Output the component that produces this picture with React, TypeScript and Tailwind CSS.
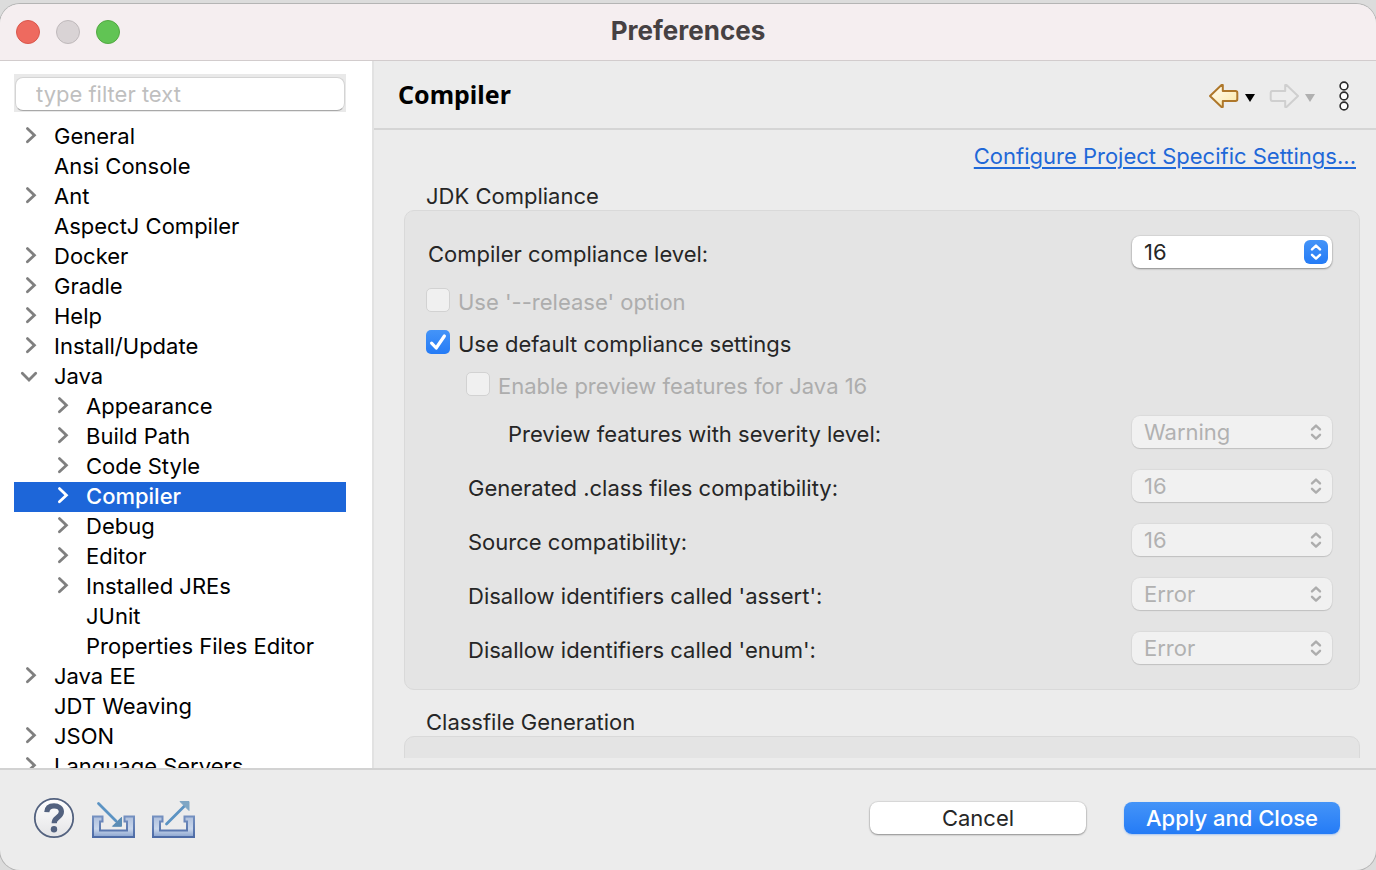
import React from "react";

type Node = { name: string; level?: 0 | 1; state?: "closed" | "open" | "leaf"; selected?: boolean };

const nodes: Node[] = [
  { name: "General" },
  { name: "Ansi Console", state: "leaf" },
  { name: "Ant" },
  { name: "AspectJ Compiler", state: "leaf" },
  { name: "Docker" },
  { name: "Gradle" },
  { name: "Help" },
  { name: "Install/Update" },
  { name: "Java", state: "open" },
  { name: "Appearance", level: 1 },
  { name: "Build Path", level: 1 },
  { name: "Code Style", level: 1 },
  { name: "Compiler", level: 1, selected: true },
  { name: "Debug", level: 1 },
  { name: "Editor", level: 1 },
  { name: "Installed JREs", level: 1 },
  { name: "JUnit", level: 1, state: "leaf" },
  { name: "Properties Files Editor", level: 1, state: "leaf" },
  { name: "Java EE" },
  { name: "JDT Weaving", state: "leaf" },
  { name: "JSON" },
  { name: "Language Servers" },
];

function TreeRow({ name, level = 0, state = "closed", selected }: Node) {
  return (
    <li
      role="treeitem"
      aria-level={level + 1}
      aria-selected={!!selected}
      className={`flex h-[30px] shrink-0 items-center gap-3 whitespace-nowrap ${level ? "pl-[38px]" : "pl-[6px]"} ${
        selected ? "bg-[#1d66d9] font-medium text-white" : "text-black"
      }`}
    >
      <svg width="22" height="22" viewBox="0 0 22 22" className={selected ? "text-white" : "text-[#808080]"} fill="none" stroke="currentColor" strokeWidth="2.8" strokeLinecap="round" strokeLinejoin="miter" aria-hidden="true">
        {state === "closed" && <path d="M7.4 2.6 14.4 9.2 7.4 15.8" />}
        {state === "open" && <path d="M2.3 7.3 9 14 15.7 7.3" />}
      </svg>
      <span className="pb-[2px]">{name}</span>
    </li>
  );
}

function Popup({ id, value, disabled }: { id: string; value: string; disabled?: boolean }) {
  return (
    <div className="relative w-[200px] shrink-0">
      <select
        id={id}
        disabled={disabled}
        defaultValue={value}
        className={`block h-8 w-full appearance-none rounded-[8px] pl-3 pr-9 leading-8 opacity-100 outline-none ${
          disabled
            ? "bg-[#f1f1f1] text-[#b1b1b1] shadow-[0_0_1px_1px_rgba(0,0,0,0.04),0_1px_1px_rgba(0,0,0,0.12)]"
            : "bg-white text-[#262626] shadow-[0_0_1px_1px_rgba(0,0,0,0.06),0_1px_2px_rgba(0,0,0,0.35)]"
        }`}
      >
        <option>{value}</option>
      </select>
      <span
        className={`pointer-events-none absolute right-1 top-1 flex size-6 items-center justify-center rounded-[6px] ${
          disabled ? "text-[#adadad]" : "bg-linear-to-b from-[#4494f8] to-[#247bf6] text-white"
        }`}
      >
        <svg width="24" height="24" viewBox="0 0 24 24" fill="none" stroke="currentColor" strokeWidth="2.4" strokeLinecap="round" strokeLinejoin="round" aria-hidden="true">
          <path d="M8 9.4 12 5.6l4 3.8M8 14.8l4 3.8 4-3.8" />
        </svg>
      </span>
    </div>
  );
}

function SelectRow({ id, label, value, disabled, indent }: { id: string; label: string; value: string; disabled?: boolean; indent: string }) {
  return (
    <div className={`flex h-[54px] items-center justify-between ${indent}`}>
      <label htmlFor={id} className="pt-1">
        {label}
      </label>
      <Popup id={id} value={value} disabled={disabled} />
    </div>
  );
}

function CheckRow({ id, label, checked, disabled, indent }: { id: string; label: string; checked?: boolean; disabled?: boolean; indent: string }) {
  return (
    <div className={`flex h-[42px] items-center gap-2 ${indent}`}>
      <span className="relative size-6 shrink-0">
        <input
          id={id}
          type="checkbox"
          defaultChecked={checked}
          disabled={disabled}
          className="block size-6 appearance-none rounded-[5px] border border-[#d2d2d2] bg-[#f0f0f0] checked:border-0 checked:bg-linear-to-b checked:from-[#4494f8] checked:to-[#247bf6]"
        />
        {checked && (
          <svg className="pointer-events-none absolute inset-0" width="24" height="24" viewBox="0 0 24 24" fill="none" stroke="#fff" strokeWidth="3.2" strokeLinecap="round" strokeLinejoin="round" aria-hidden="true">
            <path d="M5.6 13.2 10.2 18 18.4 6" />
          </svg>
        )}
      </span>
      <label htmlFor={id} className={`pt-1 ${disabled ? "text-[#adadad]" : ""}`}>
        {label}
      </label>
    </div>
  );
}

function Tray({ children, id }: { children: React.ReactNode; id: string }) {
  return (
    <svg width="43" height="40" viewBox="0 0 43 40" aria-hidden="true">
      <defs>
        <linearGradient id={id} x1="0" y1="0" x2="0" y2="1">
          <stop offset="0" stopColor="#aebfdc" />
          <stop offset="0.6" stopColor="#c9d7ec" />
          <stop offset="1" stopColor="#8ba4cf" />
        </linearGradient>
        <linearGradient id={`${id}-edge`} x1="0" y1="0" x2="0" y2="1">
          <stop offset="0" stopColor="#7490c0" />
          <stop offset="1" stopColor="#4d6ba6" />
        </linearGradient>
      </defs>
      <path d="M1 18.500H10.500V23.500H8V32.500H35V23.500H32.500V18.500H42V39H1Z" fill={`url(#${id})`} stroke={`url(#${id}-edge)`} strokeWidth="2" />
      {children}
    </svg>
  );
}

function Toolbar() {
  return (
    <div className="flex items-center">
      <button type="button" aria-label="Back" className="flex">
        <svg width="32" height="28" viewBox="0 -1 32 28">
          <defs>
            <linearGradient id="back" x1="0" y1="0" x2="1" y2="1">
              <stop offset="0" stopColor="#fffef8" />
              <stop offset="1" stopColor="#fce7a4" />
            </linearGradient>
          </defs>
          <path d="M2 14 13.500 3h1.300v6H27.500c1.100 0 1.800.6 1.800 1.700v6.600c0 1.100-.7 1.700-1.800 1.700H14.800V25h-1.300Z" fill="url(#back)" stroke="#ae772a" strokeWidth="2" strokeLinejoin="round" />
        </svg>
      </button>
      <button type="button" aria-label="Back history" className="ml-1 flex">
        <svg width="12" height="28" viewBox="0 -1 12 28">
          <path d="M1 12H11L6 20Z" fill="#000" />
        </svg>
      </button>
      <button type="button" aria-label="Forward" disabled className="ml-3 flex">
        <svg width="32" height="28" viewBox="0 -1 32 28">
          <path d="M30 14 18.500 3h-1.300v6H4.500C3.400 9 2.700 9.600 2.700 10.700v6.600c0 1.100.7 1.700 1.800 1.700H17.200V25h1.300Z" fill="#ededed" stroke="#cfcfcf" strokeWidth="2" strokeLinejoin="round" />
        </svg>
      </button>
      <button type="button" aria-label="Forward history" disabled className="ml-1 flex">
        <svg width="12" height="28" viewBox="0 -1 12 28">
          <path d="M1 12H11L6 20Z" fill="#b0b0b0" />
        </svg>
      </button>
      <button type="button" aria-label="View menu" className="ml-5 flex">
        <svg width="14" height="32" viewBox="0 0 14 32" fill="#fff" stroke="#2c2c2c" strokeWidth="1.6">
          <circle cx="8" cy="7" r="3.9" />
          <circle cx="8" cy="17" r="3.9" />
          <circle cx="8" cy="27" r="3.9" />
        </svg>
      </button>
    </div>
  );
}

export default function App() {
  return (
    <div className="flex h-screen flex-col bg-[#dcdcdc] pt-1 font-['Inter','Liberation_Sans',sans-serif] text-[22px] leading-[28px] text-[#262626]">
      <div className="flex min-h-0 flex-1 flex-col overflow-hidden rounded-[20px] bg-[#ececec] shadow-[0_0_0_1px_#b4b4b4]">
        <header className="grid h-[57px] shrink-0 grid-cols-[1fr_auto_1fr] items-center border-b border-[#d2cccd] bg-[#f5eef0] px-4">
          <div className="flex gap-4">
            <button type="button" aria-label="Close" className="size-6 rounded-full border border-[#d9574c] bg-[#ee6a5f]" />
            <button type="button" aria-label="Minimize" disabled className="size-6 rounded-full border border-[#bfb9bb] bg-[#d9d3d5]" />
            <button type="button" aria-label="Zoom" className="size-6 rounded-full border border-[#52a842] bg-[#61c454]" />
          </div>
          <h1 className="pb-[2px] text-[26px] font-bold text-[#464143]">Preferences</h1>
        </header>

        <div className="flex min-h-0 flex-1">
          <aside className="flex w-[372px] shrink-0 flex-col overflow-hidden bg-white pl-[14px] pr-[26px] pt-[13px]">
            <div className="shrink-0 bg-[#e9e9e9] px-[1px] pb-px pt-[3px]">
              <input
                type="text"
                aria-label="Filter"
                placeholder="type filter text"
                className="block h-[34px] w-full rounded-[8px] border border-[#d4d4d4] border-b-[#a8a8a8] bg-white px-5 outline-none placeholder:text-[#bfbfbf]"
              />
            </div>
            <ul role="tree" aria-label="Preference pages" className="mt-[10px] flex flex-col">
              {nodes.map((n) => (
                <TreeRow key={n.name} {...n} />
              ))}
            </ul>
          </aside>

          <main className="flex min-w-0 flex-1 flex-col border-l-2 border-[#e2e2e2]">
            <div className="flex h-[69px] shrink-0 items-center justify-between border-b-2 border-[#d5d5d5] pl-6 pr-[26px]">
              <h2 className="pb-[2px] font-['Noto_Sans','Open_Sans',sans-serif] text-[25px] font-bold text-black">Compiler</h2>
              <Toolbar />
            </div>
            <div className="mb-[10px] flex min-h-0 flex-1 flex-col overflow-hidden pl-[30px] pr-4 pt-3">
              <a href="#project-settings" className="mr-1 self-end text-[#1f68d8] underline decoration-2 underline-offset-[3px]">
                Configure Project Specific Settings...
              </a>
              <section className="mt-3 shrink-0">
                <h3 className="h-[28px] pl-[22px]">JDK Compliance</h3>
                <div className="rounded-[10px] border border-[#d9d9d9] bg-[#e4e4e4] py-[14px] pl-[21px] pr-[27px]">
                  <SelectRow id="level" label="Compiler compliance level:" value="16" indent="pl-[2px]" />
                  <CheckRow id="release" label="Use '--release' option" disabled indent="pl-0" />
                  <CheckRow id="defaults" label="Use default compliance settings" checked indent="pl-0" />
                  <CheckRow id="preview" label="Enable preview features for Java 16" disabled indent="pl-10" />
                  <SelectRow id="severity" label="Preview features with severity level:" value="Warning" disabled indent="pl-[82px]" />
                  <SelectRow id="classfiles" label="Generated .class files compatibility:" value="16" disabled indent="pl-[42px]" />
                  <SelectRow id="source" label="Source compatibility:" value="16" disabled indent="pl-[42px]" />
                  <SelectRow id="assert" label="Disallow identifiers called 'assert':" value="Error" disabled indent="pl-[42px]" />
                  <SelectRow id="enum" label="Disallow identifiers called 'enum':" value="Error" disabled indent="pl-[42px]" />
                </div>
              </section>
              <section className="mt-[18px] shrink-0">
                <h3 className="h-[28px] pl-[22px]">Classfile Generation</h3>
                <div className="h-20 rounded-[10px] border border-[#d9d9d9] bg-[#e4e4e4]" />
              </section>
            </div>
          </main>
        </div>

        <footer className="flex h-[102px] shrink-0 items-center justify-between border-t-2 border-[#d2d2d2] pb-1 pl-[33px] pr-9">
          <div className="flex items-center gap-[17px]">
            <button type="button" aria-label="Help" className="flex">
              <svg width="42" height="42" viewBox="0 0 42 42">
                <defs>
                  <linearGradient id="help" x1="0" y1="0" x2="0" y2="1">
                    <stop offset="0" stopColor="#ffffff" />
                    <stop offset="1" stopColor="#e4e4e6" />
                  </linearGradient>
                </defs>
                <circle cx="21" cy="21" r="19.2" fill="url(#help)" stroke="#53627f" strokeWidth="1.8" />
                <path d="M13.800 15.200C14 10.600 17 8.800 21 8.800c4.400 0 7.400 2.300 7.400 6 0 3-1.900 4.300-4.200 6-2.200 1.600-3 2.600-3 5.400" fill="none" stroke="#53627f" strokeWidth="5.2" />
                <circle cx="21" cy="32.2" r="3.2" fill="#53627f" />
              </svg>
            </button>
            <button type="button" aria-label="Import preferences" className="flex">
              <Tray id="tray-in">
                <path d="M6.500 5.500 24 23" stroke="#5b93c3" strokeWidth="2.8" strokeLinecap="round" />
                <path d="M29.500 28.300H20.500L29.500 19.300Z" fill="#5b8db5" stroke="#5b8db5" strokeLinejoin="round" />
              </Tray>
            </button>
            <button type="button" aria-label="Export preferences" className="flex">
              <Tray id="tray-out">
                <path d="M14.500 26 33 7.500" stroke="#5b93c3" strokeWidth="2.8" strokeLinecap="round" />
                <path d="M37 3.500H28L37 12.500Z" fill="#7fa6c4" stroke="#7fa6c4" strokeLinejoin="round" />
              </Tray>
            </button>
          </div>
          <div className="flex gap-[38px]">
            <button type="button" className="h-8 w-[216px] rounded-[8px] bg-white leading-8 shadow-[0_0_1px_1px_rgba(0,0,0,0.08),0_1px_2px_rgba(0,0,0,0.35)]">
              Cancel
            </button>
            <button type="button" className="h-8 w-[216px] rounded-[8px] bg-linear-to-b from-[#4494f8] to-[#247bf6] font-medium leading-8 text-white shadow-[0_1px_2px_rgba(36,123,246,0.35)]">
              Apply and Close
            </button>
          </div>
        </footer>
      </div>
    </div>
  );
}
